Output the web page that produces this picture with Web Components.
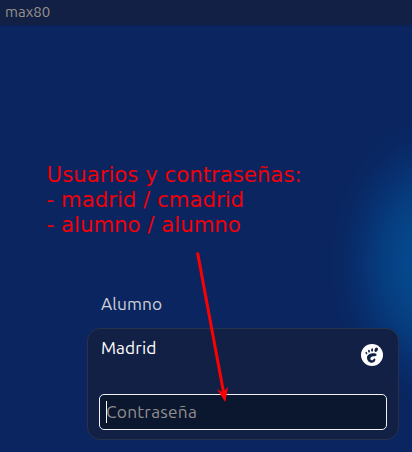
<!DOCTYPE html>
<html lang="es"><head><meta charset="utf-8"><title>max80</title>
<style>html,body{margin:0;height:100%;overflow:hidden}body{font-family:"Ubuntu","Noto Sans",sans-serif}</style></head>
<body>
<login-screen>
<top-bar slot="bar">max80</top-bar>
<user-row slot="users">Alumno</user-row>
<login-panel slot="users"><span>Madrid</span><session-icon slot="icon"></session-icon><password-field slot="field">Contraseña</password-field></login-panel>
<red-note slot="note"><span>Usuarios y contraseñas:</span><span>- madrid / cmadrid</span><span>- alumno / alumno</span></red-note>
<red-arrow slot="note"></red-arrow>
</login-screen>
<script>
const define=(name,html)=>customElements.define(name,class extends HTMLElement{
constructor(){super();this.attachShadow({mode:'open'}).innerHTML=html;}});
define('login-screen',`<style>
:host{display:flex;flex-direction:column;box-sizing:border-box;position:relative;width:412px;height:452px;overflow:hidden;
background:radial-gradient(ellipse 112px 152px at 437px 263px,#054990 0,#05478b 28%,#063e80 48%,#083070 68%,#092863 85%,#0a2560 100%)}
.users{display:flex;flex-direction:column;margin-top:auto;padding:0 13px 12px 87px}
</style><slot name="bar"></slot><div class="users"><slot name="users"></slot></div><slot name="note"></slot>`);
define('top-bar',`<style>:host{display:block;box-sizing:border-box;height:25px;padding-left:5px;background:#112044;color:#97928b;font-size:15px;line-height:24px;box-shadow:0 0 2px #112044}</style><slot></slot>`);
define('user-row',`<style>:host{display:block;height:36px;padding-left:14px;color:#cfd1d6;font-size:17.3px;letter-spacing:.1px;line-height:24px}</style><slot></slot>`);
define('login-panel',`<style>
:host{display:flex;flex-direction:column;justify-content:space-between;box-sizing:border-box;height:112px;border:1px solid #28324b;border-radius:13px;background:#112044;padding:7px 11px 9px;color:#fff;font-size:17.3px;letter-spacing:.1px}
.head{display:flex;justify-content:space-between;padding:0 4px 0 2px;line-height:24px}.icon{padding-top:8px;line-height:0}
</style><div class="head"><slot></slot><div class="icon"><slot name="icon"></slot></div></div><slot name="field"></slot>`);
define('session-icon',`<style>:host{display:block;width:22px;height:22px}svg{display:block}</style>
<svg width="22" height="22" viewBox="0 0 22 22"><circle cx="11" cy="11" r="11" fill="#fff"/><g fill="#112044"><ellipse cx="15.2" cy="5.7" rx="1.6" ry="2.3" transform="rotate(28 15.2 5.7)"/><ellipse cx="11.1" cy="6" rx="1" ry="1.7" transform="rotate(8 11.1 6)"/><ellipse cx="8" cy="7.2" rx=".9" ry="1.4" transform="rotate(-12 8 7.2)"/><ellipse cx="5.4" cy="9.1" rx=".8" ry="1.3" transform="rotate(-28 5.4 9.1)"/><path d="M15.600 10.700C15 8.300 6.200 9.100 6 13.300c-.1 3 2 5.500 4.600 5.500 2.300 0 4-1.600 3.800-3.500-.1-1-1.100-1-1.700-.4-.7.8-1.400 1.700-2.300 1.300-1.200-.5-1.400-2.100-.4-3 1.500-1.400 5.900-.7 5.600-2.500Z"/></g></svg>`);
define('password-field',`<style>:host{display:flex;align-items:center;box-sizing:border-box;height:36px;border:1px solid #f0f2f5;border-radius:5px;background:#0b172f;color:#918f8e;padding-left:6px;font-size:17.3px;letter-spacing:.25px}
i{width:1px;height:22px;background:#fff;margin-right:-1px}.text{padding-bottom:2px}</style><i></i><span class="text"><slot></slot></span>`);
define('red-note',`<style>:host{position:absolute;left:46.600px;top:162px;display:flex;flex-direction:column;font:21.25px/25px "DejaVu Sans",sans-serif;color:#f00009;white-space:nowrap}</style><slot></slot>`);
define('red-arrow',`<style>:host{position:absolute;inset:0}svg{display:block}</style><svg width="412" height="452"><path d="M197.500 252.500 223.500 392" stroke="red" stroke-width="3"/><path d="M225.300 402 217 389.300l5.800 3 5.200-5.300Z" fill="red"/></svg>`);
</script></body></html>
